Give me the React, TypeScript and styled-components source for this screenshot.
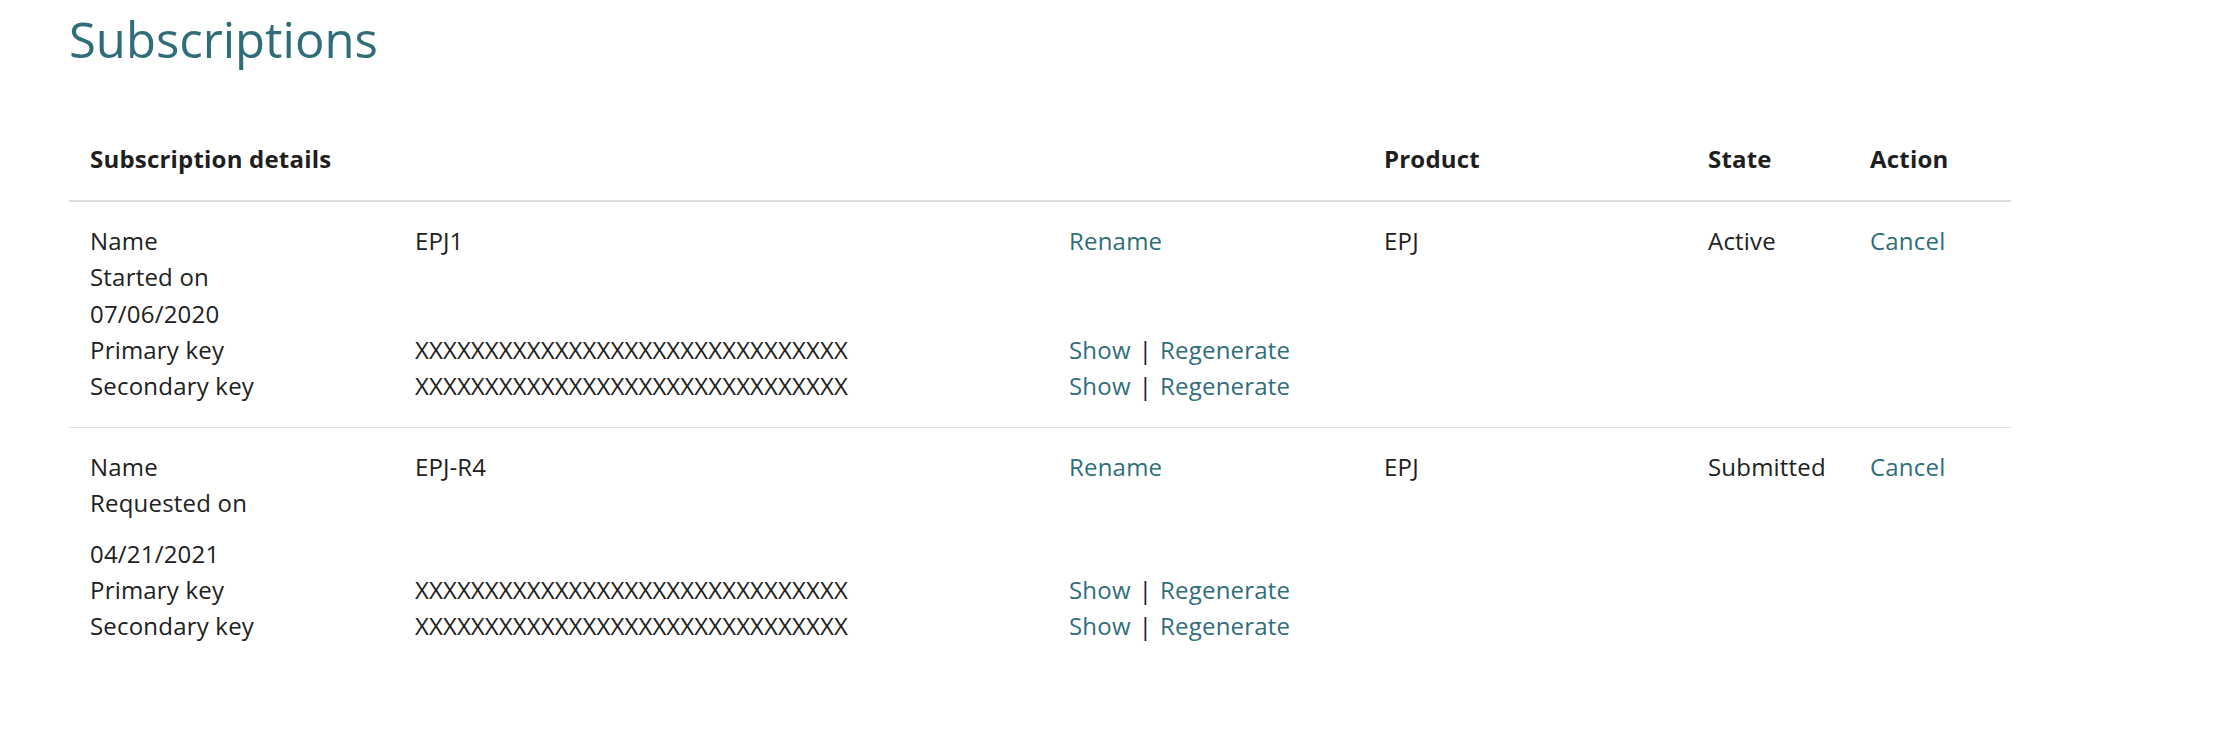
import React from "react";
import styled, { createGlobalStyle } from "styled-components";

const GlobalStyle = createGlobalStyle`
  html, body {
    margin: 0;
    padding: 0;
    background: #ffffff;
  }
  body {
    font-family: "Open Sans", "Liberation Sans", sans-serif;
    font-size: 24px;
    line-height: 1.5;
    letter-spacing: 0.2px;
    color: #212121;
  }
`;

const Page = styled.main`
  padding: 0 0 40px 69px;
`;

const Title = styled.h1`
  margin: 10px 0 0;
  font-size: 49px;
  line-height: 1.2;
  font-weight: 400;
  letter-spacing: 0;
  color: #2f6e78;
`;

const Table = styled.div`
  width: 1942px;
  margin-top: 72px;
`;

const Row = styled.div<{ $head?: boolean }>`
  display: grid;
  grid-template-columns: 1297px 324px 162px 1fr;
  line-height: ${(p) => (p.$head ? "36px" : "36.4px")};
  padding: ${(p) => (p.$head ? "0 0 23px" : "21px 0 22px")};
  border-bottom: ${(p) => (p.$head ? "2px solid #dcdde1" : "1px solid #e1e1e6")};

  &:last-child {
    border-bottom: none;
  }
`;

const HeadCell = styled.div<{ $first?: boolean }>`
  padding: 0 18px 0 ${(p) => (p.$first ? "21px" : "18px")};
  font-weight: 700;
  color: #1e1e1e;
`;

const Cell = styled.div`
  padding: 0 18px;
`;

const Details = styled.div`
  padding: 0 18px 0 21px;
  display: grid;
  grid-template-columns: 325px 654px 1fr;
`;

const Label = styled.div<{ $gap?: boolean }>`
  grid-column: 1;
  margin-top: ${(p) => (p.$gap ? "14px" : "0")};
`;

const Value = styled.div`
  grid-column: 2;
  letter-spacing: 0.1px;
`;

const Actions = styled.div`
  grid-column: 3;
`;

const LinkText = styled.a`
  color: #2f6e7a;
  text-decoration: none;
  cursor: pointer;
`;

const Sep = styled.span`
  color: #212121;
  margin: 0 8px;
`;

type Sub = {
  name: string;
  dateLabel: string;
  date: string;
  dateGap?: boolean;
  product: string;
  state: string;
};

const subs: Sub[] = [
  { name: "EPJ1", dateLabel: "Started on", date: "07/06/2020", product: "EPJ", state: "Active" },
  { name: "EPJ-R4", dateLabel: "Requested on", date: "04/21/2021", dateGap: true, product: "EPJ", state: "Submitted" },
];

const KEY = "XXXXXXXXXXXXXXXXXXXXXXXXXXXXXXX";

const KeyActions = () => (
  <Actions>
    <LinkText>Show</LinkText>
    <Sep>|</Sep>
    <LinkText>Regenerate</LinkText>
  </Actions>
);

export default function App() {
  return (
    <>
      <GlobalStyle />
      <Page>
        <Title>Subscriptions</Title>
        <Table>
          <Row $head>
            <HeadCell $first>Subscription details</HeadCell>
            <HeadCell>Product</HeadCell>
            <HeadCell>State</HeadCell>
            <HeadCell>Action</HeadCell>
          </Row>
          {subs.map((s) => (
            <Row key={s.name}>
              <Details>
                <Label>Name</Label>
                <Value>{s.name}</Value>
                <Actions>
                  <LinkText>Rename</LinkText>
                </Actions>
                <Label>{s.dateLabel}</Label>
                <Label $gap={s.dateGap}>{s.date}</Label>
                <Label>Primary key</Label>
                <Value>{KEY}</Value>
                <KeyActions />
                <Label>Secondary key</Label>
                <Value>{KEY}</Value>
                <KeyActions />
              </Details>
              <Cell>{s.product}</Cell>
              <Cell>{s.state}</Cell>
              <Cell>
                <LinkText>Cancel</LinkText>
              </Cell>
            </Row>
          ))}
        </Table>
      </Page>
    </>
  );
}
